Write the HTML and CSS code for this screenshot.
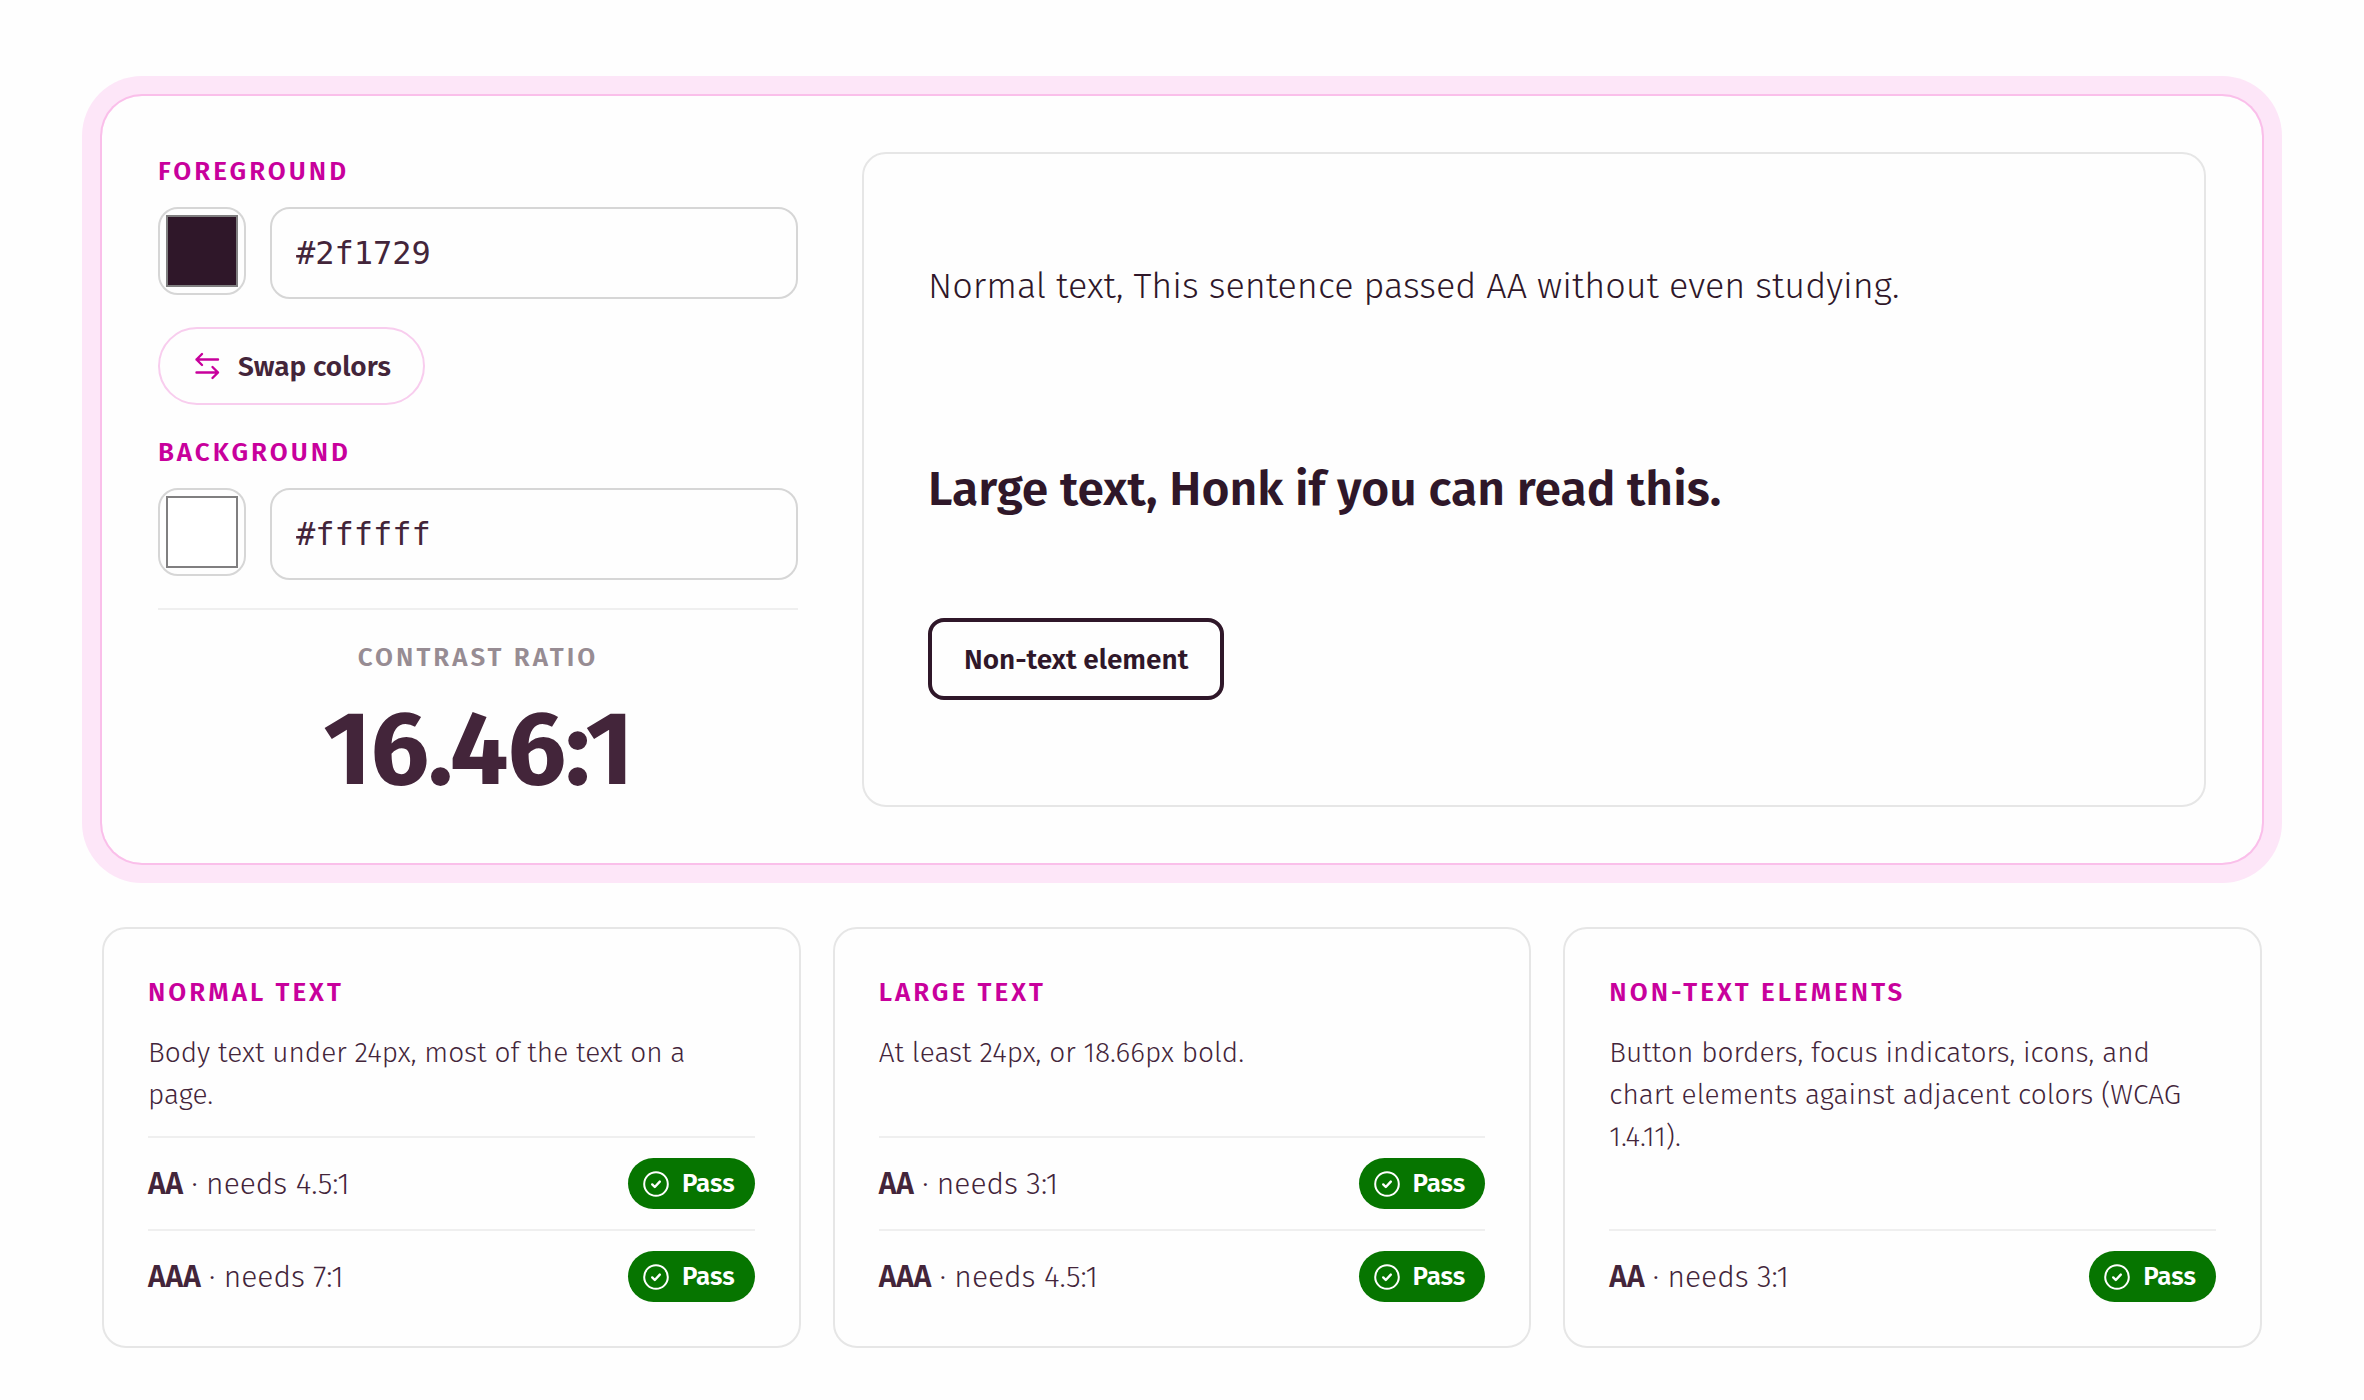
FILE: index.html
```html
<!DOCTYPE html>
<html lang="en">
<head>
    <meta charset="UTF-8">
    <meta name="viewport" content="width=device-width, initial-scale=1.0">
    <title>Color Contrast Checker</title>
    <link rel="stylesheet" href="styles.css">
</head>
<body>
    <!-- Shared pass icon -->
    <svg class="sprite" aria-hidden="true">
        <symbol id="check" viewBox="0 0 28 28">
            <circle cx="14" cy="14" r="11.8" fill="none" stroke="currentColor" stroke-width="2"/>
            <path d="M10.2 14.4l2.6 2.6 5-5.4" fill="none" stroke="currentColor" stroke-width="2.4" stroke-linecap="round" stroke-linejoin="round"/>
        </symbol>
    </svg>

    <main class="page">
        <section class="checker">
            <div class="controls">
                <div class="field">
                    <label class="label" for="fgText">Foreground</label>
                    <div class="inputs">
                        <input type="color" class="swatch" id="fgColor" value="#2f1729" aria-label="Foreground color picker">
                        <input type="text" class="hex" id="fgText" value="#2f1729" spellcheck="false">
                    </div>
                </div>

                <button type="button" class="swap" id="swap">
                    <svg class="swap-icon" viewBox="0 0 30 30" aria-hidden="true">
                        <path d="M26 8.5H4.5M10 3L4.5 8.5L10 14M4.5 21.5H26M20.5 16L26 21.5L20.5 27"/>
                    </svg>
                    Swap colors
                </button>

                <div class="field">
                    <label class="label" for="bgText">Background</label>
                    <div class="inputs">
                        <input type="color" class="swatch" id="bgColor" value="#ffffff" aria-label="Background color picker">
                        <input type="text" class="hex" id="bgText" value="#ffffff" spellcheck="false">
                    </div>
                </div>

                <div class="ratio">
                    <p class="label ratio-label">Contrast ratio</p>
                    <p class="ratio-value">16.46:1</p>
                </div>
            </div>

            <div class="preview">
                <p class="sample-normal">Normal text, This sentence passed AA without even studying.</p>
                <p class="sample-large">Large text, Honk if you can read this.</p>
                <button type="button" class="sample-button">Non-text element</button>
            </div>
        </section>

        <section class="results">
            <article class="card">
                <h2 class="label">Normal text</h2>
                <p class="description">Body text under 24px, most of the text on a page.</p>
                <ul class="levels">
                    <li class="level">
                        <span><strong>AA</strong> · needs 4.5:1</span>
                        <span class="badge"><svg class="badge-icon" aria-hidden="true"><use href="#check"/></svg>Pass</span>
                    </li>
                    <li class="level">
                        <span><strong>AAA</strong> · needs 7:1</span>
                        <span class="badge"><svg class="badge-icon" aria-hidden="true"><use href="#check"/></svg>Pass</span>
                    </li>
                </ul>
            </article>

            <article class="card">
                <h2 class="label">Large text</h2>
                <p class="description">At least 24px, or 18.66px bold.</p>
                <ul class="levels">
                    <li class="level">
                        <span><strong>AA</strong> · needs 3:1</span>
                        <span class="badge"><svg class="badge-icon" aria-hidden="true"><use href="#check"/></svg>Pass</span>
                    </li>
                    <li class="level">
                        <span><strong>AAA</strong> · needs 4.5:1</span>
                        <span class="badge"><svg class="badge-icon" aria-hidden="true"><use href="#check"/></svg>Pass</span>
                    </li>
                </ul>
            </article>

            <article class="card">
                <h2 class="label">Non-text elements</h2>
                <p class="description">Button borders, focus indicators, icons, and chart elements against adjacent colors (WCAG 1.4.11).</p>
                <ul class="levels">
                    <li class="level">
                        <span><strong>AA</strong> · needs 3:1</span>
                        <span class="badge"><svg class="badge-icon" aria-hidden="true"><use href="#check"/></svg>Pass</span>
                    </li>
                </ul>
            </article>
        </section>
    </main>
</body>
</html>
```
FILE: styles.css
```css
* {
    box-sizing: border-box;
}
body {
    margin: 0;
    background: #fefefe;
    color: #43253a;
    font-family: "Fira Sans", "Noto Sans", sans-serif;
    font-weight: 300;
}
h2, p, ul {
    margin: 0;
    padding: 0;
}
.sprite {
    display: none;
}
.page {
    padding: 96px 102px 52px;
}
.label {
    display: block;
    color: #c8009c;
    font-size: 26px;
    font-weight: 600;
    line-height: 39px;
    letter-spacing: 3px;
    text-transform: uppercase;
}

/* Checker panel */
.checker {
    display: grid;
    grid-template-columns: 10fr 21fr;
    gap: 64px;
    padding: 56px;
    border-radius: 40px;
    box-shadow: 0 0 0 2px #fabfea, 0 0 0 20px #fde6f8;
}
.controls {
    display: flex;
    flex-direction: column;
    align-items: stretch;
    gap: 28px;
}
.inputs {
    display: flex;
    align-items: flex-start;
    gap: 24px;
    margin-top: 16px;
}
.swatch {
    flex: none;
    width: 88px;
    height: 88px;
    padding: 6px;
    background: none;
    border: 2px solid #d6d6d6;
    border-radius: 20px;
    cursor: pointer;
}
.swatch::-webkit-color-swatch-wrapper {
    padding: 0;
}
.swatch::-webkit-color-swatch {
    border: 2px solid #807f80;
    border-radius: 0;
}
.hex {
    flex: 1;
    min-width: 0;
    height: 92px;
    padding: 0 24px;
    background: none;
    border: 2px solid #d6d6d6;
    border-radius: 20px;
    color: #43253a;
    font-family: "DejaVu Sans Mono", monospace;
    font-size: 32px;
}
.swap {
    display: flex;
    align-self: flex-start;
    align-items: center;
    gap: 16px;
    height: 78px;
    padding: 0 32px;
    background: none;
    border: 2px solid #f8cdee;
    border-radius: 39px;
    color: #43253a;
    font-family: inherit;
    font-size: 28px;
    font-weight: 600;
    cursor: pointer;
}
.swap-icon {
    width: 30px;
    height: 30px;
    fill: none;
    stroke: #c8009c;
    stroke-width: 2.4;
    stroke-linecap: round;
    stroke-linejoin: round;
}
.ratio {
    padding-top: 28px;
    border-top: 2px solid #efefef;
    text-align: center;
}
.ratio-label {
    color: #978c93;
}
.ratio-value {
    margin-top: 16px;
    font-size: 104px;
    font-weight: 700;
    line-height: 114px;
    letter-spacing: -1px;
}

/* Live preview */
.preview {
    display: flex;
    flex-direction: column;
    align-items: flex-start;
    justify-content: center;
    padding: 64px;
    border: 2px solid #e6e6e6;
    border-radius: 24px;
    color: #2f1729;
}
.sample-normal {
    margin-bottom: 140px;
    font-size: 36px;
    line-height: 54px;
}
.sample-large {
    margin-bottom: 93px;
    font-size: 48px;
    font-weight: 600;
    line-height: 72px;
}
.sample-button {
    height: 82px;
    padding: 0 32px;
    background: none;
    border: 4px solid #2f1729;
    border-radius: 16px;
    color: #2f1729;
    font-family: inherit;
    font-size: 28px;
    font-weight: 600;
}

/* Result cards */
.results {
    display: grid;
    grid-template-columns: repeat(3, 1fr);
    gap: 32px;
    margin-top: 64px;
}
.card {
    display: flex;
    flex-direction: column;
    padding: 44px;
    border: 2px solid #e6e6e6;
    border-radius: 24px;
}
.description {
    margin: 20px 0;
    font-size: 28px;
    line-height: 42px;
}
.levels {
    margin-top: auto;
    list-style: none;
}
.level {
    display: flex;
    align-items: center;
    justify-content: space-between;
    padding: 20px 0;
    border-top: 2px solid #efefef;
    font-size: 30px;
}
.level:last-child {
    padding-bottom: 0;
}
.level strong {
    font-weight: 600;
}
.badge {
    display: flex;
    align-items: center;
    gap: 12px;
    height: 51px;
    padding: 0 20px 0 14px;
    background: #067500;
    border-radius: 26px;
    color: #fff;
    font-size: 26px;
    font-weight: 600;
}
.badge-icon {
    width: 28px;
    height: 28px;
}
```
